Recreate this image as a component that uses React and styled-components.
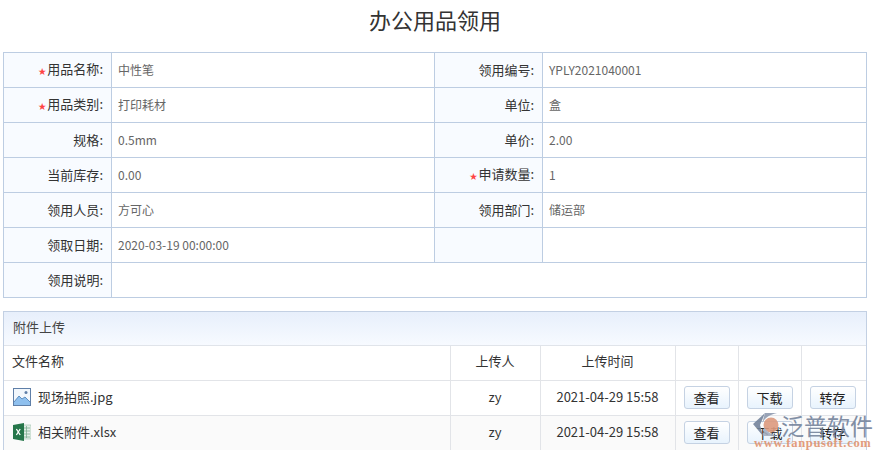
import styled, { createGlobalStyle } from 'styled-components';

const GlobalStyle = createGlobalStyle`
  html, body {
    margin: 0;
    padding: 0;
    background: #fff;
  }
  body {
    font-family: "Noto Sans CJK SC", "Liberation Sans", sans-serif;
  }
`;

const Page = styled.div`
  position: relative;
  width: 883px;
  height: 450px;
  overflow: hidden;
  box-sizing: border-box;
  padding: 0 16px 0 3px;
`;

const Title = styled.h1`
  margin: 0 0 16px;
  height: 36px;
  line-height: 38px;
  font-size: 22px;
  font-weight: 400;
  color: #333;
  text-align: center;
`;

const FormTable = styled.table`
  width: 864px;
  table-layout: fixed;
  border-collapse: collapse;
  border: 1px solid #bdcde2;

  td {
    height: 33px;
    padding: 0 0 1px;
    border: 1px solid #bdcde2;
    font-size: 12px;
    line-height: 16px;
  }
`;

const Label = styled.td`
  background: #f8fbff;
  color: #333;
  text-align: right;
  padding-right: 8px !important;
  font-size: 13px !important;
`;

const Value = styled.td`
  color: #666;
  padding-left: 6px !important;
`;

const Star = styled.span`
  color: #f44;
  font-size: 8px;
  margin-right: 1px;
`;

const Panel = styled.section`
  margin-top: 13px;
  width: 864px;
  box-sizing: border-box;
  border: 1px solid #c3d0e3;
  border-bottom: 0;
`;

const PanelHead = styled.div`
  height: 33px;
  line-height: 29px;
  padding-left: 9px;
  font-size: 13px;
  color: #444;
  background: linear-gradient(#e7effb, #f7faff);
  border-bottom: 1px solid #e0e4ea;
`;

const FileTable = styled.table`
  width: 100%;
  table-layout: fixed;
  border-collapse: collapse;

  th, td {
    height: 32px;
    padding: 0 0 2px;
    font-size: 13px;
    line-height: 16px;
    font-weight: 400;
    color: #333;
    text-align: center;
    border-left: 1px solid #e2e4e8;
    border-bottom: 1px solid #e2e4e8;
  }
  th {
    padding-bottom: 4px;
    height: 30px;
  }
  th:first-child, td:first-child {
    border-left: 0;
    text-align: left;
    padding-left: 8px;
  }
`;

const FileRow = styled.tr`
  background: ${(p) => (p.$alt ? '#fafafa' : '#fff')};
`;

const FileName = styled.div`
  display: flex;
  align-items: center;
  gap: 7px;
  padding-left: 1px;
`;

const ActionButton = styled.button`
  display: block;
  width: 46px;
  height: 23px;
  margin: 0 0 0 8px;
  padding: 0;
  border: 1px solid #c5d2e3;
  border-radius: 3px;
  background: linear-gradient(#fff, #e8f3fd);
  font-family: inherit;
  font-size: 13px;
  line-height: 19px;
  color: #222;
`;

const Watermark = styled.div`
  position: absolute;
  left: 753px;
  top: 412px;
  width: 125px;
  opacity: 0.9;
  pointer-events: none;
`;

const MarkTop = styled.div`
  display: flex;
  align-items: center;
  height: 26px;
`;

const MarkName = styled.span`
  font-size: 23px;
  line-height: 26px;
  color: #75849c;
  white-space: nowrap;
  margin-left: -4px;
`;

const MarkUrl = styled.div`
  font-family: "Liberation Serif", serif;
  font-size: 12.5px;
  line-height: 11px;
  font-weight: 700;
  letter-spacing: 0.7px;
  color: #e0926f;
  margin-left: 1px;
  white-space: nowrap;
`;

const ImageIcon = () => (
  <svg width="18" height="18" viewBox="0 0 18 18">
    <rect x="0.5" y="0.5" width="17" height="17" fill="#f2f7fc" stroke="#5f7fa8" />
    <path d="M1 17 L1 14 L6 8 L9 11 L12 9 L17 14 L17 17 Z" fill="#8fc0ee" />
    <path d="M1 14 L6 8 L9 11 L12 9 L17 14" fill="none" stroke="#5f8fc0" />
    <circle cx="13" cy="4.5" r="1.5" fill="#5f7fa8" />
  </svg>
);

const ExcelIcon = () => (
  <svg width="18" height="18" viewBox="0 0 18 18">
    <rect x="9" y="2" width="9" height="14" fill="#e4efe8" stroke="#9dc0ab" strokeWidth="0.6" />
    <path d="M10 5h7M10 8h7M10 11h7M10 14h7M13.5 3v12" stroke="#7fae92" strokeWidth="0.8" />
    <path d="M0 2 L11 0 L11 18 L0 16 Z" fill="#26764a" />
    <path d="M3.4 6 L7.2 12 M7.2 6 L3.4 12" stroke="#fff" strokeWidth="1.3" />
  </svg>
);

const LogoMark = () => (
  <svg width="32" height="26" viewBox="0 0 32 26">
    <path d="M12 1 L0 12 L10 24 L7 13 Z" fill="#75849c" />
    <path d="M12 1 L24 1 C 16 3 11 6 9 12 Z" fill="#8f9bb0" />
    <circle cx="18" cy="13" r="7.5" fill="#dd9a7e" />
    <path d="M10 24 L24 24 C 18 22 14 20 11 15 Z" fill="#a5afc0" />
  </svg>
);

const rows = [
  ['用品名称', '中性笔', '领用编号', 'YPLY2021040001', true, false],
  ['用品类别', '打印耗材', '单位', '盒', true, false],
  ['规格', '0.5mm', '单价', '2.00', false, false],
  ['当前库存', '0.00', '申请数量', '1', false, true],
  ['领用人员', '方可心', '领用部门', '储运部', false, false],
  ['领取日期', '2020-03-19 00:00:00', '', '', false, false],
];

const files = [
  { name: '现场拍照.jpg', icon: <ImageIcon /> },
  { name: '相关附件.xlsx', icon: <ExcelIcon /> },
];

const App = () => {
  return (
    <>
      <GlobalStyle />
      <Page>
        <Title>办公用品领用</Title>
        <FormTable>
          <colgroup>
            <col style={{ width: 108 }} />
            <col style={{ width: 323 }} />
            <col style={{ width: 108 }} />
            <col />
          </colgroup>
          <tbody>
            {rows.map((r) => (
              <tr key={r[0]}>
                <Label>{r[4] && <Star>★</Star>}{r[0]}:</Label>
                <Value>{r[1]}</Value>
                <Label>{r[5] && <Star>★</Star>}{r[2] && `${r[2]}:`}</Label>
                <Value>{r[3]}</Value>
              </tr>
            ))}
            <tr>
              <Label>领用说明:</Label>
              <Value colSpan={3} />
            </tr>
          </tbody>
        </FormTable>

        <Panel>
          <PanelHead>附件上传</PanelHead>
          <FileTable>
            <colgroup>
              <col style={{ width: 446 }} />
              <col style={{ width: 90 }} />
              <col style={{ width: 135 }} />
              <col style={{ width: 63 }} />
              <col style={{ width: 63 }} />
              <col />
            </colgroup>
            <thead>
              <tr>
                <th>文件名称</th>
                <th>上传人</th>
                <th>上传时间</th>
                <th />
                <th />
                <th />
              </tr>
            </thead>
            <tbody>
              {files.map((f, i) => (
                <FileRow key={f.name} $alt={i === 1}>
                  <td>
                    <FileName>{f.icon}{f.name}</FileName>
                  </td>
                  <td>zy</td>
                  <td>2021-04-29 15:58</td>
                  <td><ActionButton>查看</ActionButton></td>
                  <td><ActionButton>下载</ActionButton></td>
                  <td><ActionButton>转存</ActionButton></td>
                </FileRow>
              ))}
            </tbody>
          </FileTable>
        </Panel>

        <Watermark>
          <MarkTop>
            <LogoMark />
            <MarkName>泛普软件</MarkName>
          </MarkTop>
          <MarkUrl>www.fanpusoft.com</MarkUrl>
        </Watermark>
      </Page>
    </>
  );
};

export default App;
